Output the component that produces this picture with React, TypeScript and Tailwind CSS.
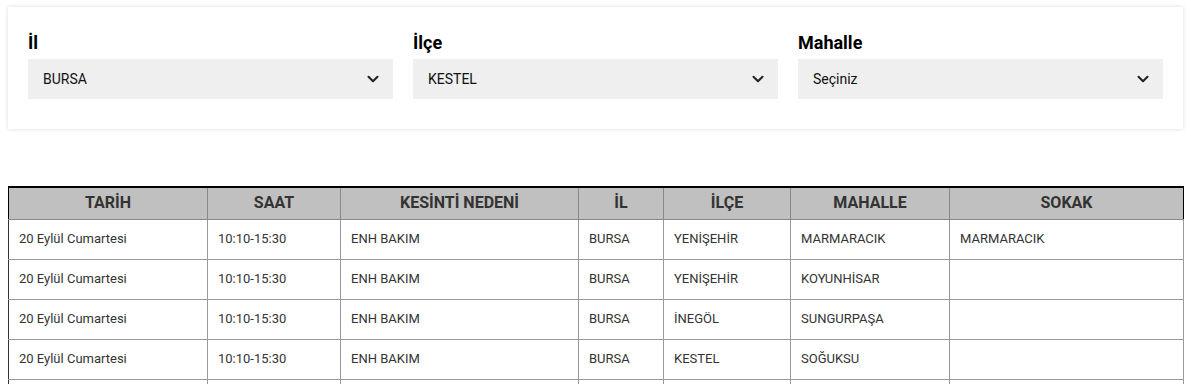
import { ChevronDown } from 'lucide-react';

const FILTERS = [
  { label: 'İl', value: 'BURSA' },
  { label: 'İlçe', value: 'KESTEL' },
  { label: 'Mahalle', value: 'Seçiniz' },
];

const COLUMNS = [
  { title: 'TARİH', w: 'w-[199px]' },
  { title: 'SAAT', w: 'w-[133px]' },
  { title: 'KESİNTİ NEDENİ', w: 'w-[238px]' },
  { title: 'İL', w: 'w-[85px]' },
  { title: 'İLÇE', w: 'w-[127px]' },
  { title: 'MAHALLE', w: 'w-[159px]' },
  { title: 'SOKAK', w: 'w-[234px]' },
];

const ROWS = [
  ['20 Eylül Cumartesi', '10:10-15:30', 'ENH BAKIM', 'BURSA', 'YENİŞEHİR', 'MARMARACIK', 'MARMARACIK'],
  ['20 Eylül Cumartesi', '10:10-15:30', 'ENH BAKIM', 'BURSA', 'YENİŞEHİR', 'KOYUNHİSAR', ''],
  ['20 Eylül Cumartesi', '10:10-15:30', 'ENH BAKIM', 'BURSA', 'İNEGÖL', 'SUNGURPAŞA', ''],
  ['20 Eylül Cumartesi', '10:10-15:30', 'ENH BAKIM', 'BURSA', 'KESTEL', 'SOĞUKSU', ''],
  ['', '', '', '', '', '', ''],
];

export default function App() {
  return (
    <div className="min-h-screen bg-white px-2 pt-[7px] font-['Roboto',sans-serif] text-[#222]">
      {/* Filters */}
      <div className="grid grid-cols-3 gap-5 bg-white px-5 pt-[24px] pb-[30px] shadow-[0_0_4px_rgba(0,0,0,0.15)]">
        {FILTERS.map(f => (
          <div key={f.label}>
            <label className="mb-[5px] block text-[18px] font-bold leading-[23px] text-black">{f.label}</label>
            <div className="flex h-10 items-center justify-between bg-[#efefef] pl-[15px] pr-[11px]">
              <span className="text-[14px] text-[#111]">{f.value}</span>
              <ChevronDown className="h-[18px] w-[18px] text-[#222]" strokeWidth={2.75} />
            </div>
          </div>
        ))}
      </div>

      {/* Outage table */}
      <table className="mt-[57px] w-[1175px] table-fixed border-collapse text-[13px]">
        <thead>
          <tr className="bg-[#c0c0c0]">
            {COLUMNS.map(c => (
              <th
                key={c.title}
                className={`${c.w} h-[32px] border-x border-t-2 border-b border-x-[#888] border-t-black border-b-[#888] first:border-l-black last:border-r-black text-center text-[16px] font-bold text-[#333]`}
              >
                {c.title}
              </th>
            ))}
          </tr>
        </thead>
        <tbody>
          {ROWS.map((r, i) => (
            <tr key={i}>
              {r.map((cell, j) => (
                <td key={j} className="h-10 border border-[#999] first:border-l-[#333] px-[10px] text-[#333]">
                  {cell}
                </td>
              ))}
            </tr>
          ))}
        </tbody>
      </table>
    </div>
  );
}
